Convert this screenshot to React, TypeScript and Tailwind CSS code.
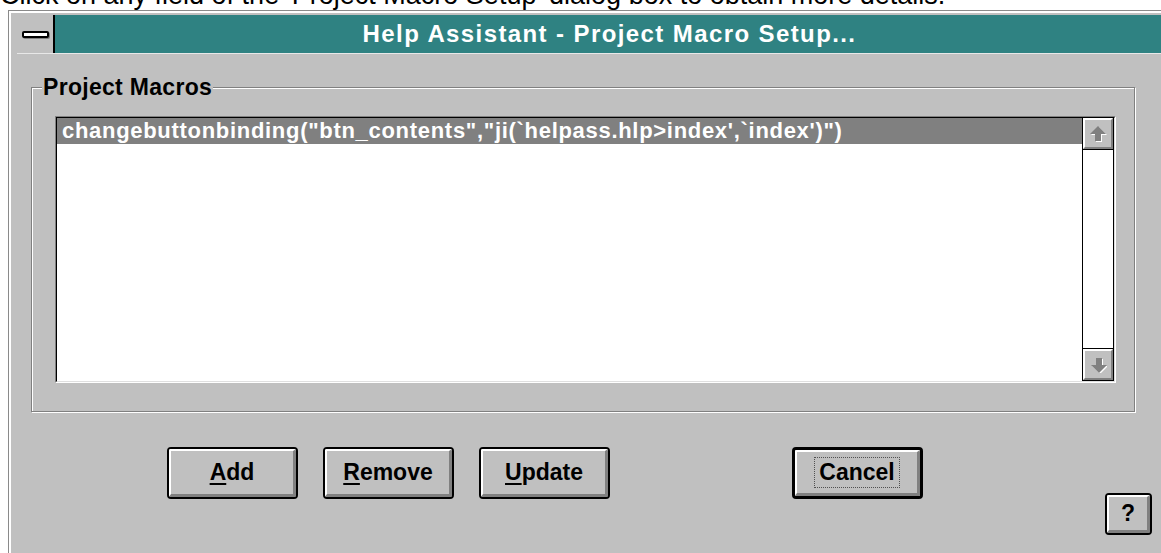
import type { ReactNode } from 'react';

const sans = "font-['Liberation_Sans',Arial,sans-serif]";

// Greyed-out scroll arrow, drawn pointing up; the down one is flipped.
const ScrollArrow = ({ down }: { down?: boolean }) => (
  <svg width="17" height="16" viewBox="0 0 17 16" className={down ? 'rotate-180' : ''}>
    {!down && <polygon points="9,1 17,9 12,9 12,16 6,16 6,9 1,9" fill="#ffffff" />}
    {down && <polygon points="7,-1 15,7 10,7 10,14 4,14 4,7 -1,7" fill="#ffffff" />}
    <polygon points="8,0 16,8 11,8 11,15 5,15 5,8 0,8" fill="#808080" />
  </svg>
);

const ScrollButton = ({ down }: { down?: boolean }) => (
  <div className="h-[31px] bg-[#c0c0c0] border-t-2 border-l-2 border-white border-b-2 border-r-2 border-b-[#808080] border-r-[#808080] flex items-center justify-center">
    <ScrollArrow down={down} />
  </div>
);

const PushButton = ({
  children,
  width,
  height,
  isDefault,
}: {
  children: ReactNode;
  width: string;
  height: string;
  isDefault?: boolean;
}) => (
  <div className={`${width} ${height} rounded-[4px] border-black ${isDefault ? 'border-[3px]' : 'border-2'}`}>
    <div className="h-full rounded-[2px] bg-[#c0c0c0] border-t-2 border-l-2 border-white border-b-[3px] border-r-[3px] border-b-[#808080] border-r-[#808080] flex items-center justify-center text-[23px] font-bold text-black">
      {children}
    </div>
  </div>
);

const Key = ({ children }: { children: ReactNode }) => (
  <span className="underline decoration-2 underline-offset-[3px]">{children}</span>
);

export default function App() {
  return (
    <div className={`${sans} w-[1161px] h-[553px] overflow-hidden bg-white`}>
      <div className="-mt-[18px] h-[27px] leading-[27px] text-[27px] text-black whitespace-nowrap">
        Click on any field of the 'Project Macro Setup' dialog box to obtain more details.
      </div>

      {/* dialog window */}
      <div className="mt-[1px] ml-[8px] w-[1162px] h-[560px] border-t border-l border-[#8a8a8a]">
        <div className="h-full border-t-2 border-l-2 border-white bg-[#c0c0c0] pt-[2px] pl-[6px] pr-[6px]">
          {/* caption bar */}
          <div className="flex h-[38px] border-b border-[#e8e8e8] box-content">
            <div className="w-[38px] h-full bg-[#c0c0c0] border-r-2 border-black flex items-center justify-center">
              <div className="w-[27px] h-[7px] rounded-[2px] border-2 border-black bg-white shadow-[1px_1px_0_#808080]" />
            </div>
            <div className="flex-1 bg-[#2f8282] text-white font-bold text-[24px] tracking-[1.4px] leading-[38px] text-center whitespace-nowrap">
              Help Assistant - Project Macro Setup...
            </div>
          </div>

          {/* Project Macros group */}
          <div className="relative mt-[33px] ml-[14px] w-[1104px] h-[325px] border border-[#808080] shadow-[inset_1px_1px_0_#ffffff,1px_1px_0_#ffffff] pt-[28px] pl-[23px]">
            <div className="absolute left-[10px] -top-[12px] px-[1px] bg-[#c0c0c0] text-[23px] leading-[23px] font-bold tracking-[0.3px] text-black">
              Project Macros
            </div>

            <div className="w-[1061px] h-[267px] border border-t-[#808080] border-l-[#808080] border-b-white border-r-white">
              <div className="h-full flex border-t border-l border-black border-b border-r border-b-[#dfdfdf] border-r-[#dfdfdf]">
                <div className="flex-1 bg-white">
                  <div className="h-[26px] bg-[#808080] pl-[5px] text-white font-bold text-[22px] tracking-[0.7px] leading-[26px] whitespace-nowrap">
                    changebuttonbinding("btn_contents","ji(`helpass.hlp&gt;index',`index')")
                  </div>
                </div>
                <div className="w-[32px] flex flex-col border-l border-r border-b border-black">
                  <ScrollButton />
                  <div className="border-t border-black flex-1 bg-white" />
                  <div className="border-t border-black">
                    <ScrollButton down />
                  </div>
                </div>
              </div>
            </div>
          </div>

          {/* command buttons */}
          <div className="mt-[35px] ml-[150px] flex items-start">
            <PushButton width="w-[131px]" height="h-[52px]">
              <Key>A</Key>dd
            </PushButton>
            <div className="ml-[25px]">
              <PushButton width="w-[131px]" height="h-[52px]">
                <Key>R</Key>emove
              </PushButton>
            </div>
            <div className="ml-[25px]">
              <PushButton width="w-[131px]" height="h-[52px]">
                <Key>U</Key>pdate
              </PushButton>
            </div>
            <div className="ml-[182px]">
              <PushButton width="w-[131px]" height="h-[52px]" isDefault>
                <span className="px-[4px] leading-[29px] border border-dotted border-[#505050]">Cancel</span>
              </PushButton>
            </div>
            <div className="ml-[182px] mt-[46px]">
              <PushButton width="w-[47px]" height="h-[42px]">
                ?
              </PushButton>
            </div>
          </div>
        </div>
      </div>
    </div>
  );
}
